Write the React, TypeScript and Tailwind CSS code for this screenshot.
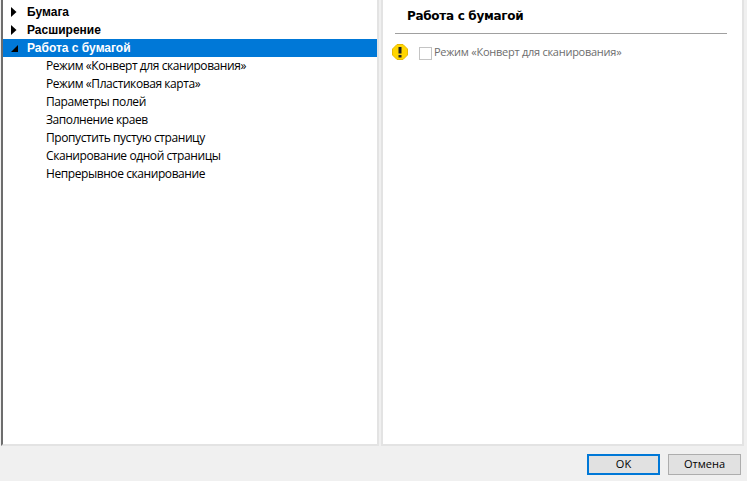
const ui = "font-['Open_Sans','Noto_Sans',sans-serif]";
const boldTree = "font-['Liberation_Sans',Arial,sans-serif] text-[12px] font-bold";

const children = [
  'Режим «Конверт для сканирования»',
  'Режим «Пластиковая карта»',
  'Параметры полей',
  'Заполнение краев',
  'Пропустить пустую страницу',
  'Сканирование одной страницы',
  'Непрерывное сканирование',
];

function Collapsed() {
  return (
    <svg width="6" height="10" viewBox="0 0 6 10" className="ml-[8px] mr-[10px] shrink-0">
      <path d="M0 0 L5.5 5 L0 10 Z" fill="#000" />
    </svg>
  );
}

function Expanded() {
  return (
    <svg width="7" height="7" viewBox="0 0 7 7" className="ml-[8px] mr-[9px] shrink-0">
      <path d="M7 0 V7 H0 Z" fill="#000" />
    </svg>
  );
}

function TreeParent({ label }: { label: string }) {
  return (
    <div className="flex h-[18px] items-center">
      <Collapsed />
      <span className={`${boldTree} text-black`}>{label}</span>
    </div>
  );
}

export default function App() {
  return (
    <div className={`flex h-[481px] w-[747px] flex-col overflow-hidden bg-[#f0f0f0] ${ui}`}>
      <div className="flex h-[446px] gap-[2px] pl-[1px] pr-[3px]">
        <div className="w-[378px] border-b-2 border-l-2 border-r-2 border-b-[#e3e3e3] border-l-[#6d6d6d] border-r-[#e3e3e3] bg-white pt-[3px]">
          <TreeParent label="Бумага" />
          <TreeParent label="Расширение" />
          <div className="flex h-[18px] items-center bg-[#0078d7]">
            <Expanded />
            <span className={`${boldTree} text-white`}>Работа с бумагой</span>
          </div>
          {children.map((c) => (
            <div key={c} className="flex h-[18px] items-center pl-[43px] text-[12px] tracking-[-0.42px] text-black">
              {c}
            </div>
          ))}
        </div>
        <div className="flex-1 border-b-2 border-l-2 border-r-2 border-[#e3e3e3] bg-white">
          <div className="ml-[12px] mr-[15px] h-[34px] border-b border-[#a0a0a0] pl-[12px] pt-[6px] font-['DejaVu_Sans',sans-serif] text-[12px] font-bold leading-[20px] tracking-[-0.3px] text-black">
            Работа с бумагой
          </div>
          <div className="ml-[9px] mt-[9px] flex h-[20px] items-center">
            <svg width="16" height="16" viewBox="0 0 16 16" className="mb-[2px] shrink-0">
              <path d="M5 0.5 H11 L15.5 5 V11 L11 15.5 H5 L0.5 11 V5 Z" fill="#ffd500" stroke="#e8b800" />
              <rect x="6.5" y="3" width="3" height="6.5" fill="#222" />
              <rect x="6.5" y="11" width="3" height="2.5" fill="#222" />
            </svg>
            <span className="ml-[11px] h-[13px] w-[13px] shrink-0 border border-[#c4c4c4] bg-white" />
            <span className="mb-[2px] ml-[2px] text-[11px] tracking-[-0.26px] text-[#6d6d6d]">Режим «Конверт для сканирования»</span>
          </div>
        </div>
      </div>
      <div className="flex flex-1 items-start justify-end gap-[8px] pr-[6px] pt-[8px]">
        <button className="h-[21px] w-[73px] border-2 border-[#0078d7] bg-[#e1e1e1] text-[11px] text-black">OK</button>
        <button className="h-[21px] w-[73px] border border-[#adadad] bg-[#e1e1e1] text-[11px] text-black">Отмена</button>
      </div>
    </div>
  );
}
